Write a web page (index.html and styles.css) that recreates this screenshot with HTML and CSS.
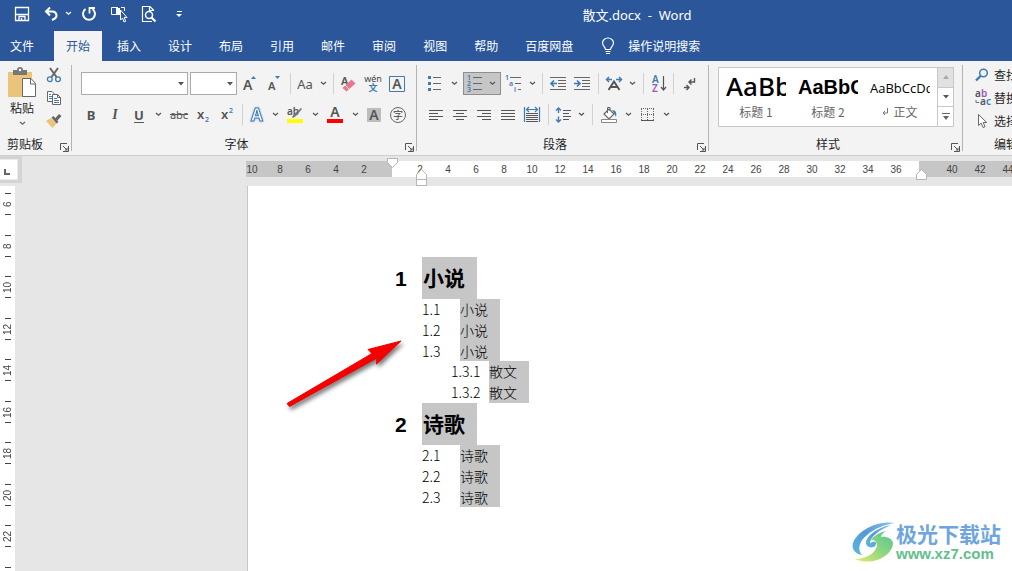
FILE: index.html
```html
<!DOCTYPE html>
<html lang="zh-CN">
<head>
<meta charset="utf-8">
<title>散文.docx - Word</title>
<link rel="stylesheet" href="styles.css">
</head>
<body>
<svg class="defs" aria-hidden="true">
  <symbol id="caret" viewBox="0 0 7 5"><path d="M1 1l2.500 2.200L6 1" fill="none" stroke="currentColor" stroke-width="1.300"/></symbol>
  <symbol id="tri" viewBox="0 0 6 4"><path d="M0 0h6L3 3.500z" fill="currentColor"/></symbol>
  <symbol id="launch" viewBox="0 0 9 9"><path d="M.5 7V.5H7M3 3l4 4M8.500 3v5.500H3" fill="none" stroke="#555"/><path d="M7.500 4.500v3h-3z" fill="#555"/></symbol>
</svg>

<header class="titlebar">
  <div class="quick">
    <button class="q" aria-label="保存"><svg width="16" height="16"><path d="M1.500 1.500h13v13h-13zM2 8.500h12M5 14v-3.500h6V14M7.500 12v2" fill="none" stroke="#fff" stroke-width="1.300"/></svg></button>
    <button class="q undo" aria-label="撤消"><svg width="16" height="16"><path d="M6 1.500L2 5.500l4 4M2.500 5.500H9a4.500 4 0 0 1 1 7.500L8 14" fill="none" stroke="#fff" stroke-width="2"/></svg></button>
    <button class="q mini" aria-label="撤消选项"><svg width="7" height="5"><use href="#caret"/></svg></button>
    <button class="q" aria-label="重复"><svg width="16" height="16"><path d="M4.500 3A6 6 0 1 0 11.500 3" fill="none" stroke="#fff" stroke-width="2"/><path d="M8.500 7.500V2H14" fill="none" stroke="#fff" stroke-width="1.800"/></svg></button>
    <button class="q" aria-label="选择对象"><svg width="18" height="18"><path d="M8 9.500H1.500v-7H8" fill="none" stroke="#fff"/><path d="M6 3h4v7H6z" fill="#fff"/><path d="M11 2.500h3.500V6" fill="none" stroke="#fff"/><path d="M10.500 5v10l2-2 1.500 4 1.700-.7-1.500-3.800h2.800z" fill="#2b579a" stroke="#fff"/></svg></button>
    <button class="q" aria-label="打印预览"><svg width="16" height="18"><path d="M12.500 6V5L9 1.500H1.500v15H11M8.500 2v3.500H12" fill="none" stroke="#fff" stroke-width="1.200"/><circle cx="8" cy="10" r="3.500" fill="none" stroke="#fff" stroke-width="1.500"/><path d="M10.500 12.500l4 4" stroke="#fff" stroke-width="2.200"/></svg></button>
    <button class="q" aria-label="自定义快速访问工具栏"><svg width="7" height="8"><path d="M1 1.500h5" stroke="#fff"/><path d="M0 4h6L3 7z" fill="#fff"/></svg></button>
  </div>
  <div class="title">散文.docx&nbsp; -&nbsp; Word</div>
</header>

<nav class="tabs">
  <button class="file">文件</button>
  <button class="on">开始</button>
  <button>插入</button>
  <button>设计</button>
  <button>布局</button>
  <button>引用</button>
  <button>邮件</button>
  <button>审阅</button>
  <button>视图</button>
  <button>帮助</button>
  <button>百度网盘</button>
  <button class="tell"><svg width="14" height="18"><path d="M4.500 12.500C4.500 10 1.500 9 1.500 6a5.500 5 0 0 1 11 0c0 3-3 4-3 6.500zM4.500 14.500h5M5 16.500h4" fill="none" stroke="#fff" stroke-width="1.200"/></svg>操作说明搜索</button>
</nav>

<section class="ribbon">
  <div class="group clip">
    <div class="clip-body">
      <button class="paste"><svg width="30" height="31"><path d="M1 5h24v25H1z" fill="#ebc47c"/><path d="M6 3h4a3 3 0 0 1 6 0h4v5H6z" fill="#777"/><circle cx="13" cy="3" r="1.200" fill="#fff"/><path d="M15.500 11.500H24l4.500 5v13h-13z" fill="#fff" stroke="#666"/><path d="M23.500 12v5H28" fill="none" stroke="#666"/></svg><span>粘贴</span><svg class="grey" width="7" height="5"><use href="#caret"/></svg></button>
      <div class="clip-side">
        <button aria-label="剪切"><svg width="16" height="16"><path d="M4 1l6.500 9M12 1L5.500 10" stroke="#666" stroke-width="2"/><circle cx="3.800" cy="12.200" r="2.400" fill="none" stroke="#3f7ab5" stroke-width="1.300"/><circle cx="12" cy="12.200" r="2.400" fill="none" stroke="#3f7ab5" stroke-width="1.300"/></svg></button>
        <button aria-label="复制"><svg width="16" height="16"><path d="M6 11.500H1.500V1.500H6L8.500 4" fill="#fff" stroke="#666"/><path d="M3 4.500h2M3 6.500h3M3 8.500h3" stroke="#3f7ab5"/><path d="M6.500 4.500h5l3 3v7h-8z" fill="#fff" stroke="#666"/><path d="M11.500 4.500v3h3" fill="none" stroke="#666"/><path d="M8 8.500h3M8 10.500h5M8 12.500h5" stroke="#3f7ab5"/></svg></button>
        <button aria-label="格式刷"><svg width="16" height="16"><path d="M0 8l5-3 5.500 5.500-4 4.500z" fill="#ebc47c"/><path d="M5.500 4.500l2-1.500 5 6-2 1.500z" fill="#666"/><path d="M9 5.500L13 1l2.500 2L11 8z" fill="#666"/></svg></button>
      </div>
    </div>
    <div class="caption">剪贴板<button class="launcher" aria-label="剪贴板设置"><svg width="9" height="9"><use href="#launch"/></svg></button></div>
  </div>

  <div class="group font">
    <div class="row">
      <label class="combo wide"><select aria-label="字体"><option></option></select><svg width="6" height="4"><use href="#tri"/></svg></label>
      <label class="combo"><select aria-label="字号"><option></option></select><svg width="6" height="4"><use href="#tri"/></svg></label>
      <button class="b" aria-label="增大字号"><svg width="20" height="20"><text x="2" y="16" class="g" font-size="14">A</text><path d="M10 5h5l-2.500-3z" fill="#3f7ab5"/></svg></button>
      <button class="b" aria-label="减小字号"><svg width="20" height="20"><text x="3" y="16" class="g" font-size="11">A</text><path d="M10 2h5l-2.500 3z" fill="#3f7ab5"/></svg></button>
      <i class="sep"></i>
      <button class="b s">Aa</button><button class="c" aria-label="更改大小写"><svg width="7" height="5"><use href="#caret"/></svg></button>
      <i class="sep"></i>
      <button class="b" aria-label="清除格式"><svg width="20" height="20"><text x="2" y="11" class="g" font-size="11">A</text><path d="M3.500 14l9-8.500 4 4-9 8z" fill="#e8788c"/><path d="M6 11l4.500 4.500" stroke="#f3f3f3"/></svg></button>
      <button class="b" aria-label="拼音指南"><svg width="20" height="20"><text x="10" y="8" text-anchor="middle" class="n" font-size="9">wén</text><text x="10" y="17" text-anchor="middle" class="cjkblue" font-size="9">文</text></svg></button>
      <button class="b" aria-label="字符边框"><svg width="20" height="20"><path d="M2.500 2.500h15v15h-15z" fill="none" stroke="#3f7ab5"/><text x="10" y="15" text-anchor="middle" class="g" font-size="14">A</text></svg></button>
    </div>
    <div class="row">
      <button class="b bold">B</button>
      <button class="b ital">I</button>
      <button class="b under">U</button><button class="c" aria-label="下划线"><svg width="7" height="5"><use href="#caret"/></svg></button>
      <i class="gap"></i>
      <button class="b strike">abc</button>
      <button class="b" aria-label="下标"><svg width="20" height="20"><text x="4" y="14" class="g" font-size="13">x</text><text x="12" y="17" class="bl" font-size="7">2</text></svg></button>
      <button class="b" aria-label="上标"><svg width="20" height="20"><text x="4" y="14" class="g" font-size="13">x</text><text x="12" y="8" class="bl" font-size="7">2</text></svg></button>
      <i class="sep"></i>
      <button class="b s" aria-label="文本效果"><svg width="20" height="20"><text x="10" y="16" text-anchor="middle" font-size="17" class="fx">A</text></svg></button><button class="c" aria-label="文本效果选项"><svg width="7" height="5"><use href="#caret"/></svg></button>
      <button class="b l" aria-label="突出显示"><svg width="20" height="20"><text x="2" y="10" class="g" font-size="10">ab</text><path d="M7 12l2-3 7-6 1 1-6 7-3 2z" fill="#777"/><path d="M2 14h16v4H2z" fill="#ff0"/></svg></button><button class="c" aria-label="突出显示颜色"><svg width="7" height="5"><use href="#caret"/></svg></button>
      <button class="b l" aria-label="字体颜色"><svg width="20" height="20"><text x="10" y="12" text-anchor="middle" class="g" font-size="14">A</text><path d="M2 14h16v4H2z" fill="red"/></svg></button><button class="c" aria-label="字体颜色选项"><svg width="7" height="5"><use href="#caret"/></svg></button>
      <button class="b" aria-label="字符底纹"><svg width="20" height="20"><path d="M3 3h14v14H3z" fill="#bdbdbd"/><text x="10" y="15" text-anchor="middle" class="g" font-size="14">A</text></svg></button>
      <button class="b" aria-label="带圈字符"><svg width="20" height="20"><circle cx="10" cy="10" r="7.500" fill="none" stroke="#666"/><text x="10" y="14" text-anchor="middle" class="cjk" font-size="10">字</text></svg></button>
    </div>
    <div class="caption">字体<button class="launcher" aria-label="字体设置"><svg width="9" height="9"><use href="#launch"/></svg></button></div>
  </div>

  <div class="group para">
    <div class="row">
      <button class="b s" aria-label="项目符号"><svg width="20" height="20"><path d="M2 2h3v3H2zM2 8h3v3H2zM2 14h3v3H2z" fill="#3f7ab5"/><path d="M7 3.500h8M7 9.500h8M7 15.500h8" stroke="#666"/></svg></button><button class="c" aria-label="项目符号库"><svg width="7" height="5"><use href="#caret"/></svg></button>
      <i class="gap"></i>
      <span class="pressed"><button class="b s" aria-label="编号"><svg width="20" height="20"><text x="3" y="6" class="bl" font-size="7">1</text><text x="3" y="12" class="bl" font-size="7">2</text><text x="3" y="18" class="bl" font-size="7">3</text><path d="M9 3.500h9M9 9.500h9M9 15.500h9" stroke="#666"/></svg></button><button class="c" aria-label="编号库"><svg width="7" height="5"><use href="#caret"/></svg></button></span>
      <button class="b" aria-label="多级列表"><svg width="20" height="20"><text x="2" y="6" class="bl" font-size="7">1</text><text x="6" y="12" class="bl" font-size="7">a</text><text x="11" y="18" class="bl" font-size="7">i</text><path d="M7 3.500h11M12 9.500h6M15 15.500h3" stroke="#666"/></svg></button><button class="c" aria-label="多级列表库"><svg width="7" height="5"><use href="#caret"/></svg></button>
      <i class="sep"></i>
      <button class="b" aria-label="减少缩进量"><svg width="20" height="20"><path d="M2 3.500h16M10 6.500h8M10 9.500h8M10 12.500h8M2 15.500h16" stroke="#666"/><path d="M9 9.500H3M6 6.500l-3 3 3 3" fill="none" stroke="#3f7ab5" stroke-width="1.700"/></svg></button>
      <button class="b" aria-label="增加缩进量"><svg width="20" height="20"><path d="M2 3.500h16M10 6.500h8M10 9.500h8M10 12.500h8M2 15.500h16" stroke="#666"/><path d="M2 9.500h6M5 6.500l3 3-3 3" fill="none" stroke="#3f7ab5" stroke-width="1.700"/></svg></button>
      <i class="sep w"></i>
      <button class="b s" aria-label="中文版式"><svg width="20" height="20"><path d="M4.500 16L10 7.500 15.500 16M6.500 13h7" fill="none" stroke="#555" stroke-width="1.900"/><path d="M8 5.500H3M5 3L2.500 5.500 5 8M12 5.500h5M15 3l2.500 2.500L15 8" fill="none" stroke="#3f7ab5" stroke-width="1.500"/></svg></button><button class="c" aria-label="中文版式选项"><svg width="7" height="5"><use href="#caret"/></svg></button>
      <i class="sep w"></i>
      <button class="b s" aria-label="排序"><svg width="20" height="20"><text x="3" y="9" class="bl" font-size="10">A</text><text x="3" y="18" class="pu" font-size="10">Z</text><path d="M14.500 2v14M12 13l2.500 3 2.500-3" fill="none" stroke="#555" stroke-width="1.200"/></svg></button>
      <i class="sep"></i>
      <button class="b" aria-label="显示编辑标记"><svg width="20" height="20"><path d="M15.500 4v4H10M12.500 5.500L10 8l2.500 2.500M5 13.500h5M7.500 11l2.500 2.500L7.500 16" fill="none" stroke="#555" stroke-width="1.400"/></svg></button>
    </div>
    <div class="row">
      <button class="b" aria-label="左对齐"><svg width="20" height="20"><path d="M2 5.500h14M2 8.500h9M2 11.500h14M2 14.500h9" stroke="#555"/></svg></button>
      <button class="b" aria-label="居中"><svg width="20" height="20"><path d="M2 5.500h14M5 8.500h8M2 11.500h14M5 14.500h8" stroke="#555"/></svg></button>
      <button class="b" aria-label="右对齐"><svg width="20" height="20"><path d="M2 5.500h14M7 8.500h9M2 11.500h14M7 14.500h9" stroke="#555"/></svg></button>
      <button class="b" aria-label="两端对齐"><svg width="20" height="20"><path d="M2 5.500h14M2 8.500h14M2 11.500h14M2 14.500h14" stroke="#555"/></svg></button>
      <button class="b" aria-label="分散对齐"><svg width="20" height="20"><path d="M3 8.500h12M3 10.500h12M3 12.500h12M3 14.500h12M3 16.500h12" stroke="#555"/><path d="M1.500 2v15M16.500 2v15M4 4.500h10M6 2L3.500 4.500 6 7M12 2l2.500 2.500L12 7" fill="none" stroke="#3f7ab5" stroke-width="1.200"/></svg></button>
      <i class="sep"></i>
      <button class="b s" aria-label="行距"><svg width="20" height="20"><path d="M10 5.500h8M10 8.500h6M10 11.500h8M10 14.500h6" stroke="#555"/><path d="M5.500 3v5M3 5.500L5.500 3 8 5.500M5.500 11.500v5M3 14.500L5.500 17 8 14.500" fill="none" stroke="#3f7ab5" stroke-width="1.400"/></svg></button><button class="c" aria-label="行距选项"><svg width="7" height="5"><use href="#caret"/></svg></button>
      <i class="sep w"></i>
      <button class="b" aria-label="底纹"><svg width="20" height="20"><path d="M5 9l5-5 5 5-5 5z" fill="#fff" stroke="#666" stroke-width="1.200"/><path d="M8.500 8V2.500h2.500V6" fill="none" stroke="#666"/><path d="M13 5c4 0 5 3 4 7l-2-4z" fill="#3f7ab5"/><path d="M2.500 14.500h15v3h-15z" fill="#fff" stroke="#888"/></svg></button><button class="c" aria-label="底纹选项"><svg width="7" height="5"><use href="#caret"/></svg></button>
      <button class="b" aria-label="边框"><svg width="20" height="20"><path d="M4 3.500h13M4 9.500h13M4.500 4v12M10.500 4v12M16.500 4v12" stroke="#666" stroke-dasharray="1 1"/><path d="M4 15.500h13" stroke="#555"/></svg></button><button class="c" aria-label="边框选项"><svg width="7" height="5"><use href="#caret"/></svg></button>
    </div>
    <div class="caption">段落<button class="launcher" aria-label="段落设置"><svg width="9" height="9"><use href="#launch"/></svg></button></div>
  </div>

  <div class="group styles">
    <div class="gallery">
      <button class="style"><span class="sample h1s">AaBb</span><span>标题 1</span></button>
      <button class="style"><span class="sample h2s">AaBbC</span><span>标题 2</span></button>
      <button class="style"><span class="sample">AaBbCcDd</span><span><svg width="7" height="8"><path d="M5.500 0v5H1M3 3L1 5l2 2" fill="none" stroke="#777"/></svg> 正文</span></button>
      <div class="scroll">
        <button class="off" aria-label="上一行"><svg width="6" height="4"><path d="M0 4h6L3 0z" fill="#aaa"/></svg></button>
        <button aria-label="下一行"><svg width="6" height="4"><use href="#tri"/></svg></button>
        <button aria-label="更多样式"><svg width="8" height="8"><path d="M0 .5h8" stroke="#666"/><path d="M1 3h6L4 7z" fill="#666"/></svg></button>
      </div>
    </div>
    <div class="caption">样式<button class="launcher" aria-label="样式设置"><svg width="9" height="9"><use href="#launch"/></svg></button></div>
  </div>

  <div class="group edit">
    <button><svg width="14" height="14"><circle cx="8.500" cy="5" r="3.800" fill="none" stroke="#3f7ab5" stroke-width="1.500"/><path d="M5.500 8L1 12.500" stroke="#3f7ab5" stroke-width="2.400"/></svg>查找</button>
    <button><svg width="16" height="16"><text x="0" y="7" class="g" font-size="10">a</text><text x="6" y="7" class="pu" font-size="10">b</text><text x="5" y="15" class="g" font-size="10">a</text><text x="11" y="15" class="bl" font-size="10">c</text><path d="M1 10v2.500h3" fill="none" stroke="#3f7ab5"/></svg>替换</button>
    <button><svg width="14" height="16"><path d="M3.500 1.500v11l2.700-2.400 1.800 4.400 2-.8-1.800-4.200h3.500z" fill="#fff" stroke="#666"/></svg>选择</button>
    <div class="caption">编辑</div>
  </div>
</section>

<div class="rulerbar">
  <div class="tabsel"><button aria-label="左对齐制表符"><svg width="6" height="6"><path d="M1 0v5h5" fill="none" stroke="#666" stroke-width="2"/></svg></button></div>
  <div class="ruler">
    <div class="dark left"><span>10</span><span>8</span><span>6</span><span>4</span><span>2</span></div>
    <div class="light"><span>2</span><span>4</span><span>6</span><span>8</span><span>10</span><span>12</span><span>14</span><span>16</span><span>18</span><span>20</span><span>22</span><span>24</span><span>26</span><span>28</span><span>30</span><span>32</span><span>34</span><span>36</span></div>
    <div class="dark right"><span>40</span><span>42</span><span>44</span></div>
    <svg class="mark first" width="11" height="10"><path d="M.5.5h10v4l-5 5-5-5z" fill="#fff" stroke="#b5b5b5"/></svg>
    <svg class="mark hang" width="11" height="17"><path d="M.5 16.500V5.500l5-5 5 5v11zM.5 10.500h10" fill="#fff" stroke="#b5b5b5"/></svg>
    <svg class="mark end" width="11" height="11"><path d="M.5 10.500v-5l5-5 5 5v5z" fill="#fff" stroke="#b5b5b5"/></svg>
  </div>
</div>

<main class="work">
  <div class="vruler"><span>6</span><span>8</span><span>10</span><span>12</span><span>14</span><span>16</span><span>18</span><span>20</span><span>22</span><span></span></div>
  <article class="page">
    <h1><span class="num">1</span><mark>小说</mark></h1>
    <div class="list three"><p><span class="num">1.1</span><mark>小说</mark></p><p><span class="num">1.2</span><mark>小说</mark></p><p><span class="num">1.3</span><mark>小说</mark></p></div>
    <div class="list deep"><p><span class="num">1.3.1</span><mark>散文</mark></p><p><span class="num">1.3.2</span><mark>散文</mark></p></div>
    <h1><span class="num">2</span><mark>诗歌</mark></h1>
    <div class="list three"><p><span class="num">2.1</span><mark>诗歌</mark></p><p><span class="num">2.2</span><mark>诗歌</mark></p><p><span class="num">2.3</span><mark>诗歌</mark></p></div>
    <svg class="arrow" width="124" height="80"><path d="M6 67.500L91 17.500 87 13.500 120 5 95.500 28 96 22 8.500 70.500z" fill="#f50000" stroke="#f50000" stroke-linejoin="round"/></svg>
  </article>
  <div class="brand">
    <svg width="44" height="42" viewBox="0 0 44 42">
      <defs>
        <linearGradient id="ga" x1="0" y1="1" x2="1" y2="0"><stop offset="0" stop-color="#5cb8dc"/><stop offset=".5" stop-color="#5598d8"/><stop offset="1" stop-color="#8bc4ea"/></linearGradient>
        <linearGradient id="gb" x1="0" y1="1" x2="1" y2="0"><stop offset="0" stop-color="#e9ea70"/><stop offset=".5" stop-color="#8fd77f"/><stop offset="1" stop-color="#54c294"/></linearGradient>
      </defs>
      <path d="M43 2C28-1 6 8 1 22c-2 7 3 11 9 12-5-5-3-14 5-20C22 8 31 4 43 2z" fill="url(#ga)"/>
      <path d="M39 4C26 6 14 15 14 22c0 4 6 6 9 3 2-2 1-5-2-4-2 0-3 1-3 2-1-7 10-14 21-19z" fill="url(#ga)"/>
      <path d="M3 38c10 0 20-5 22-13 0-4-3-7-7-6 5-5 10-8 16-9-3 2-5 4-5 6 5-1 11 1 12 6C41 34 21 46 3 38z" fill="url(#gb)"/>
    </svg>
    <div class="brand-text"><b>极光下载站</b><span>www.xz7.com</span></div>
  </div>
</main>
</body>
</html>
```
FILE: styles.css
```css
* { box-sizing: border-box; }
html, body { height: 100%; }
body {
  margin: 0;
  display: flex;
  flex-direction: column;
  overflow: hidden;
  background: #e6e6e6;
  color: #262626;
  font: 12px/16px "Noto Sans CJK SC", sans-serif;
}
button {
  margin: 0;
  padding: 0;
  border: 0;
  background: none;
  color: inherit;
  font: inherit;
  white-space: nowrap;
}
svg { display: block; flex: none; overflow: visible; }
.defs { position: absolute; width: 0; height: 0; }

.titlebar {
  position: relative;
  flex: none;
  display: flex;
  height: 31px;
  align-items: center;
  background: #2b579a;
  color: #fff;
}
.quick { display: flex; align-items: center; padding: 0 0 4px 10px; }
.q { display: grid; place-items: center; width: 30px; height: 24px; }
.q:first-child { width: 24px; margin-right: 6px; }
.undo { width: 24px; }
.mini { width: 8px; margin-right: 2px; }
.title {
  position: absolute;
  left: 0;
  right: 0;
  padding-left: 262px;
  padding-bottom: 2px;
  text-align: center;
  font-size: 13px;
  font-family: "Noto Sans", "Noto Sans CJK SC", sans-serif;
}

.tabs { flex: none; display: flex; gap: 3px; height: 30px; background: #2b579a; color: #fff; }
.tabs button { padding: 0 12px 1px; }
.tabs .file { padding: 0 17px 1px 10px; }
.tabs .on { background: #f3f3f3; color: #2b579a; }
.tabs .tell { display: flex; align-items: center; gap: 13px; padding-left: 13px; }

.ribbon {
  flex: none;
  display: flex;
  background: #f3f3f3;
  border-bottom: 1px solid #d0d0d0;
  height: 95px;
  overflow: hidden;
}
.group {
  position: relative;
  flex: none;
  display: flex;
  flex-direction: column;
  gap: 8px;
  padding: 11px 6px 3px;
}
.group::after {
  content: "";
  position: absolute;
  top: 4px;
  bottom: 4px;
  right: 0;
  width: 1px;
  background: #b4b4b4;
}
.row { display: flex; align-items: center; height: 23px; color: #555; }
.caption { display: flex; align-items: center; justify-content: center; margin-top: auto; }
.launcher { position: absolute; right: 3px; bottom: 3px; }
.group .caption { padding-right: 16px; }

.b { display: grid; place-items: center; width: 24px; height: 23px; flex: none; }
.b.s { width: 22px; }
.b.l { width: 26px; }
.c { display: grid; place-items: center; width: 14px; height: 23px; flex: none; }
.sep { width: 7px; height: 21px; flex: none; background: linear-gradient(#d0d0d0, #d0d0d0) 3px 0 / 1px 100% no-repeat; }
.sep.w { width: 9px; background-position: 4px 0; }
.gap { width: 2px; flex: none; }
.pressed { display: flex; align-items: center; height: 23px; width: 38px; flex: none; background: #c6c6c6; box-shadow: inset 0 0 0 1px #8f8f8f; }
.row button { font-family: "Noto Sans", sans-serif; }
.row .b { font-size: 13px; }
.row .bold { font-weight: 700; }
.row .ital { font-family: "Liberation Serif", serif; font-style: italic; font-weight: 700; font-size: 14px; }
.row .under { font-weight: 700; text-decoration: underline; text-underline-offset: 2px; }
.row .strike { font-size: 11px; text-decoration: line-through; }

.g, .bl, .pu { font-family: "Noto Sans", sans-serif; font-weight: 600; fill: #555; }
.n { font-family: "Noto Sans", sans-serif; fill: #444; }
.bl { fill: #3f7ab5; }
.pu { fill: #9b59b6; }
.cjk, .cjkblue { font-family: "Noto Sans CJK SC", sans-serif; fill: #444; }
.cjkblue { fill: #3f7ab5; font-weight: 700; }
.fx { font-family: "Noto Sans", sans-serif; font-weight: 700; fill: #fff; stroke: #3f7ab5; filter: drop-shadow(0 0 1px #8fb6de); }

.combo { position: relative; width: 47px; height: 23px; margin-right: 2px; }
.combo.wide { width: 107px; margin-left: 2px; }
.combo select {
  display: block;
  appearance: none;
  width: 100%;
  height: 100%;
  border: 1px solid #ababab;
  border-radius: 0;
  background: #fff;
}
.combo svg { position: absolute; right: 4px; top: 10px; color: #555; }

.group.clip { gap: 0; padding: 6px 10px 3px 7px; }
.group.clip .caption { justify-content: flex-start; }
.clip-body { display: flex; gap: 9px; }
.paste { display: flex; flex-direction: column; align-items: center; width: 30px; }
.paste span { margin: 2px 0 5px; }
.grey { color: #666; }
.clip-side { display: flex; flex-direction: column; gap: 7px; width: 16px; }
.font { padding-left: 7px; padding-right: 7px; }
.para { padding-left: 8px; padding-right: 8px; }

.group.styles { padding: 6px 9px 3px; }
.gallery { display: flex; border: 1px solid #c8c8c8; background: #fff; height: 60px; }
.style { display: flex; flex-direction: column; align-items: center; width: 72px; padding: 0 5px 0 7px; color: #666; }
.style span { display: flex; align-items: center; gap: 4px; }
.style .sample {
  display: block;
  width: 60px;
  height: 36px;
  overflow: hidden;
  text-align: left;
  color: #000;
  font: 13px/40px "Open Sans", sans-serif;
}
.style .h1s { font: 500 26px/36px "Noto Sans", sans-serif; }
.style .h2s { font: 700 20px/39px "Liberation Sans", sans-serif; }
.scroll { display: flex; flex-direction: column; width: 16px; margin-left: 2px; border-left: 1px solid #c8c8c8; color: #555; }
.scroll button { flex: 1; display: grid; place-items: center; }
.scroll button + button { border-top: 1px solid #c8c8c8; }
.scroll .off { background: #e1e1e1; }

.group.edit { gap: 7px; padding: 6px 0 3px 12px; }
.edit::after { display: none; }
.edit button { display: flex; align-items: center; gap: 4px; height: 16px; }
.edit button svg { width: 15px; }
.group.edit .caption { padding: 0 0 0 19px; }

.rulerbar { flex: none; display: flex; height: 30px; }
.tabsel { flex: none; width: 22px; height: 27px; padding: 3px 4px 3px 0; background: #d4d4d4; }
.tabsel button { display: grid; place-items: center; width: 100%; height: 100%; padding: 4px 4px 0 0; background: #fff; border: 1px solid #ebebeb; border-left: 0; }
.ruler {
  position: relative;
  flex: 1;
  min-width: 0;
  display: flex;
  height: 16px;
  margin: 5px 0 0 224px;
  font: 10px/17px "Liberation Sans", sans-serif;
  color: #444;
}
.ruler span { flex: none; width: 28px; text-align: center; }
.dark { display: flex; background: #c6c6c6; }
.dark.left { flex: none; width: 146px; padding-right: 14px; justify-content: flex-end; }
.light { flex: none; display: flex; padding: 0 9px 0 14px; background: #fff; }
.dark.right { flex: 1; min-width: 0; padding-left: 19px; overflow: hidden; }
.mark { position: absolute; }
.first { left: 141px; top: -3px; }
.hang { left: 170px; top: 8px; }
.end { left: 670px; top: 8px; }

.work { position: relative; flex: 1; min-height: 0; display: flex; overflow: hidden; }
.vruler { width: 15px; flex: none; background: #fff; padding-top: 7px; font: 10px/15px "Liberation Sans", sans-serif; color: #444; }
.vruler span {
  display: block;
  width: 15px;
  height: 22px;
  margin-bottom: 20px;
  writing-mode: vertical-rl;
  transform: rotate(180deg);
  text-align: center;
  background: linear-gradient(#444, #444) 4px 0 / 6px 1px no-repeat, linear-gradient(#444, #444) 4px 100% / 6px 1px no-repeat;
}
.vruler span:nth-child(even) { margin-bottom: 19px; }
.page {
  position: relative;
  flex: 1;
  margin-left: 232px;
  padding: 71px 0 0 147px;
  border-left: 1px solid #c6c6c6;
  background: #fff;
  color: #000;
}
mark { background: #c6c6c6; color: inherit; }
h1, p { display: flex; margin: 0; }
h1 { font: 700 21px/44px "Liberation Sans", "Noto Sans CJK SC", sans-serif; height: 42px; }
h1 .num { width: 27px; flex: none; }
h1 mark { width: 55px; padding-left: 1px; }
.list { display: grid; margin-left: 27px; font: 300 14px/21px "Noto Sans CJK SC", sans-serif; }
.three { grid-template-rows: 21px 21px 20px; }
.deep { grid-template-rows: 21px 21px; margin-left: 56px; }
.list p { overflow: hidden; }
.list .num { width: 38px; }
.list mark { width: 40px; }
.arrow { position: absolute; left: 33px; top: 150px; filter: drop-shadow(2px 3px 2px #0008); }

.brand { position: absolute; right: 11px; bottom: 8px; display: flex; align-items: center; }
.brand-text { display: flex; flex-direction: column; color: #6ea6dc; }
.brand-text b { font-size: 21px; line-height: 24px; }
.brand-text span { color: #62c08c; font: 700 15px/18px "Liberation Sans", sans-serif; }
```
